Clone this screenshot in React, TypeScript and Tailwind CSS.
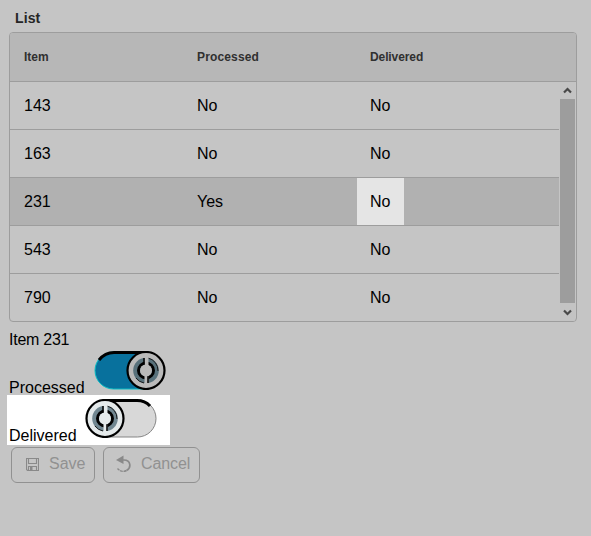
const rows = [
  ["143", "No", "No"],
  ["163", "No", "No"],
  ["231", "Yes", "No"],
  ["543", "No", "No"],
  ["790", "No", "No"],
];

function Toggle({ on = false }: { on?: boolean }) {
  const cx = on ? 52 : 21;
  const light = on ? "#bababa" : "#e5eaeb";
  const slate = on ? "#58717b" : "#718791";
  return (
    <svg width="73" height="39" viewBox="0 0 73 39" className="shrink-0">
      <rect x={on ? 1 : 3} y="1" width="69" height="37" rx="18.5" fill={on ? "#08719d" : "#d8d8d8"} stroke={on ? "#08bdc4" : "#858585"} />
      <path d={on ? "M5 9Q11 1.5 20 1.5H52" : "M21 1.5H53Q61 1.5 66 7"} fill="none" stroke="#000" strokeWidth="3" />
      <circle cx={cx} cy="19.5" r="18.5" fill={light} stroke="#000" strokeWidth="2.2" />
      <circle cx={cx} cy="19.5" r="12.8" fill={slate} />
      <path d={`M${cx - 10} 27A12.8 12.8 0 0 0 ${cx - 2} 32M${cx + 2} 7A12.8 12.8 0 0 1 ${cx + 12} 20`} fill="none" stroke="#17191a" strokeWidth="1" />
      <circle cx={cx} cy="19.5" r="7.5" fill="none" stroke="#000" strokeWidth="3" />
      <path d={`M${cx + 0.5} 6V33`} stroke={light} strokeWidth="4" />
      <path d={`M${cx - 2} 7V14M${cx + 2} 25V32`} stroke="#000" strokeWidth="1.5" />
      <circle cx={cx} cy="19.5" r="6" fill={light} />
    </svg>
  );
}

function SaveIcon() {
  return (
    <svg width="13" height="13" viewBox="0 0 13 13" fill="none" stroke="#898989" strokeWidth="1.1">
      <path d="M.5 .5H12.5V12.5H1.5L.5 11.5ZM2.5 .5V5.5H10.5V.5M2.5 12.5V8.5H10.5V12.5" />
      <path d="M4 9H6.5V12H4Z" fill="#898989" stroke="none" />
    </svg>
  );
}

function UndoIcon() {
  return (
    <svg width="15" height="18" viewBox="0 0 15 18" fill="none" stroke="#898989">
      <path d="M6 5H8C15 5 15.5 13 10.5 15.5" strokeWidth="1.7" />
      <path d="M10.5 15.5Q5.5 18 1.5 13.5" strokeWidth="1.4" strokeDasharray="3 .7" />
      <path d="M0 5L7.5 .5V9Z" fill="#898989" stroke="none" />
    </svg>
  );
}

function Arrow({ down = false }: { down?: boolean }) {
  return (
    <svg width="9" height="7" viewBox="0 0 9 7">
      <path d={down ? "M1 1.5L4.5 5L8 1.5" : "M1 5.5L4.5 2L8 5.5"} fill="none" stroke="#484848" strokeWidth="2.2" />
    </svg>
  );
}

export default function App() {
  return (
    <main className="flex h-[536px] w-[591px] flex-col overflow-hidden bg-[#c5c5c5] font-['Liberation_Sans',Arial,sans-serif] text-base text-black">
      <h1 className="h-8 shrink-0 pt-2 pl-[15px] text-sm leading-5 font-bold tracking-[0.1px] text-[#252525]">List</h1>
      <section className="ml-[9px] h-[290px] w-[568px] shrink-0 overflow-hidden rounded border border-[#9d9d9d]">
        <div className="grid h-[49px] grid-cols-[173px_173px_1fr] items-center border-b border-[#9d9d9d] bg-[#b7b7b7] text-xs font-bold text-[#303030]">
          <span className="pl-[14px]">Item</span>
          <span className="pl-[14px] tracking-[0.15px]">Processed</span>
          <span className="pl-[14px] tracking-[-0.1px]">Delivered</span>
        </div>
        <div className="flex h-[239px]">
          <div className="w-[549px]">
            {rows.map((row, i) => (
              <div key={row[0]} className={`grid h-12 grid-cols-[173px_173px_1fr] border-b border-[#9d9d9d] leading-[47px] ${i === 2 ? "bg-[#b1b1b1]" : ""}`}>
                <span className="pl-[14px]">{row[0]}</span>
                <span className="pl-[14px]">{row[1]}</span>
                <span className={i === 2 ? "ml-px w-[47px] bg-[#e5e5e5] pl-[13px]" : "pl-[14px]"}>{row[2]}</span>
              </div>
            ))}
          </div>
          <div className="ml-px flex w-[15px] flex-col items-center bg-[#c3c3c3]">
            <div className="flex h-[17px] items-center"><Arrow /></div>
            <div className="h-[204px] w-full bg-[#9d9d9d]" />
            <div className="flex h-[18px] items-center"><Arrow down /></div>
          </div>
        </div>
      </section>
      <div className="h-[29px] shrink-0 pt-[9px] pl-[9px] leading-[18px] tracking-[-0.25px]">Item 231</div>
      <div className="flex h-11 shrink-0 items-start pl-[9px]">
        <span className="w-[85px] pt-7 leading-[18px]">Processed</span><Toggle on />
      </div>
      <div className="ml-[7px] flex h-[50px] w-[163px] shrink-0 items-start bg-white pl-0.5">
        <span className="w-[75px] pt-8 leading-[18px]">Delivered</span><div className="pt-1"><Toggle /></div>
      </div>
      <div className="mt-0.5 ml-[11px] flex gap-2 text-[#919191]">
        <button className="flex h-9 w-[84px] items-center gap-[10px] rounded-md border border-[#919191] pb-0.5 pl-[14px]"><SaveIcon />Save</button>
        <button className="flex h-9 w-[97px] items-center gap-[10px] rounded-md border border-[#919191] pb-0.5 pl-3 tracking-[-0.1px]"><UndoIcon />Cancel</button>
      </div>
    </main>
  );
}
